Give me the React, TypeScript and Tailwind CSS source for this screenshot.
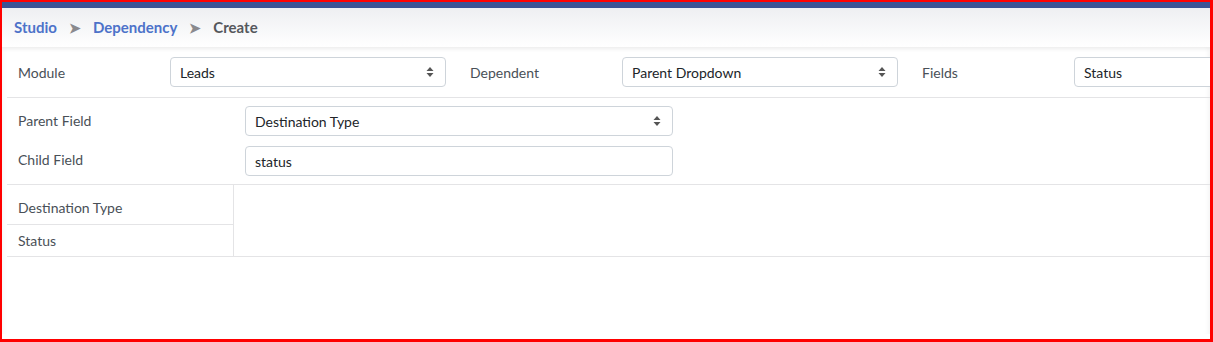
import React from "react";

const Arrows = () => (
  <svg width="8" height="12" viewBox="0 0 8 12" className="shrink-0">
    <path d="M4 1 L7.5 5 L0.5 5 Z" fill="#555" />
    <path d="M4 11 L7.5 7 L0.5 7 Z" fill="#555" />
  </svg>
);

const Select = ({ value, className }: { value: string; className: string }) => (
  <div
    className={`flex h-[30px] shrink-0 items-center justify-between rounded-[4px] border border-[#ced4da] bg-white pl-[9px] pr-[11px] text-[14px] text-[#212529] ${className}`}
  >
    <span>{value}</span>
    <Arrows />
  </div>
);

export default function App() {
  return (
    <div
      className="box-border h-[342px] w-[1213px] overflow-hidden border-b-[3px] border-l-2 border-r-[3px] border-t-2 border-[#ff0000] bg-white"
      style={{ fontFamily: "Lato, 'Noto Sans', sans-serif" }}
    >
      <div className="h-[6px] bg-[#3c5395]" />
      <div className="relative z-10 flex h-[39px] items-center gap-[12px] bg-gradient-to-b from-[#eeeff2] to-white pb-[1px] pl-[12px] text-[15px] font-bold shadow-[0_2px_4px_rgba(0,0,0,0.08)]">
        <span className="text-[#4d72c9]">Studio</span>
        <span className="text-[14px] text-[#8a8a8e]">➤</span>
        <span className="text-[#4d72c9]">Dependency</span>
        <span className="text-[14px] text-[#8a8a8e]">➤</span>
        <span className="text-[#55575c]">Create</span>
      </div>
      <div className="h-[287px] shadow-[inset_6px_0_6px_-6px_rgba(0,0,0,0.06),inset_-6px_0_6px_-6px_rgba(0,0,0,0.08)]">
        <div className="ml-[5px] w-[1400px] text-[14px] text-[#495057]">
          <div className="flex items-center border-b border-[#e4e4e6] pb-[10px] pt-[10px] pl-[11px]">
            <span className="w-[152px] shrink-0">Module</span>
            <Select value="Leads" className="w-[276px]" />
            <span className="ml-[24px] w-[152px] shrink-0">Dependent</span>
            <Select value="Parent Dropdown" className="w-[276px]" />
            <span className="ml-[24px] w-[152px] shrink-0">Fields</span>
            <Select value="Status" className="w-[276px]" />
          </div>
          <div className="flex flex-col gap-[10px] border-b border-[#e4e4e6] py-[8px] pl-[11px]">
            <div className="flex items-center">
              <span className="w-[227px] shrink-0 pb-[2px]">Parent Field</span>
              <Select value="Destination Type" className="w-[428px]" />
            </div>
            <div className="flex items-center">
              <span className="w-[227px] shrink-0 pb-[3px]">Child Field</span>
              <div className="flex h-[30px] w-[428px] items-center rounded-[4px] border border-[#ced4da] bg-white pl-[9px] text-[#212529]">
                status
              </div>
            </div>
          </div>
          <div className="flex border-b border-[#e4e4e6]">
            <div className="w-[227px] shrink-0 border-r border-[#e4e4e6]">
              <div className="flex h-[40px] items-end border-b border-[#e4e4e6] pb-[6px] pl-[11px]">
                Destination Type
              </div>
              <div className="flex h-[31px] items-center pl-[11px]">Status</div>
            </div>
            <div className="flex-1" />
          </div>
        </div>
      </div>
    </div>
  );
}
